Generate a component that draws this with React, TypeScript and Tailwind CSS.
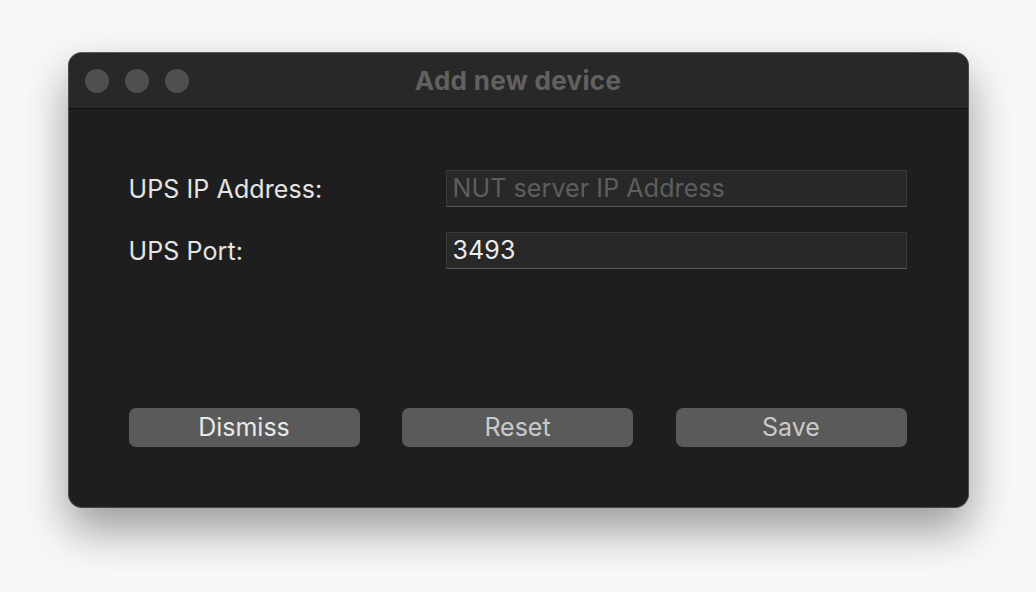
import React from "react";

const font = { fontFamily: 'Inter, "Liberation Sans", sans-serif' };

function Field({ label, value, placeholder }: { label: string; value?: string; placeholder?: string }) {
  return (
    <div className="flex items-center h-[37px]">
      <div className="w-[317px] text-[25px] tracking-[0.1px] text-[#e4e4e4] pt-[2px]">{label}</div>
      <div className="flex-1 h-[37px] flex items-center bg-[#282828] border border-[#3a3a3a] border-b-[#575757] px-[6px] text-[25px] tracking-[0.1px]">
        {value ? (
          <span className="text-[#ececec]">{value}</span>
        ) : (
          <span className="text-[#5e5e5e]">{placeholder}</span>
        )}
      </div>
    </div>
  );
}

function Btn({ children, dim }: { children: React.ReactNode; dim?: boolean }) {
  return (
    <button
      className={
        "w-[231px] h-[39px] rounded-[7px] bg-[#5a5a5a] text-[25px] flex items-center justify-center " +
        (dim ? "text-[#c9c9c9]" : "text-[#e8e8e8]")
      }
    >
      {children}
    </button>
  );
}

export default function App() {
  return (
    <div className="w-[1036px] h-[592px] bg-[#f8f8f8] flex justify-center pt-[52px]" style={font}>
      <div className="w-[901px] h-[456px] rounded-[14px] bg-[#1e1e1e] border border-[#4a4a4a] border-t-[#5a5a5a] shadow-[0_22px_45px_rgba(0,0,0,0.38)] flex flex-col overflow-hidden">
        {/* Title bar */}
        <div className="relative h-[56px] bg-[#282828] border-b border-[#0c0c0c] flex items-center pl-[16px]">
          <div className="flex gap-[16px]">
            <span className="w-[24px] h-[24px] rounded-full bg-[#4f4f4f]" />
            <span className="w-[24px] h-[24px] rounded-full bg-[#4f4f4f]" />
            <span className="w-[24px] h-[24px] rounded-full bg-[#4f4f4f]" />
          </div>
          <div className="absolute inset-0 flex items-center justify-center text-[26px] font-bold tracking-[0.3px] text-[#616161]">
            Add new device
          </div>
        </div>

        {/* Body */}
        <div className="flex-1 flex flex-col pt-[61px] pb-[60px] pl-[60px] pr-[61px]">
          <div className="flex flex-col gap-[25px]">
            <Field label="UPS IP Address:" placeholder="NUT server IP Address" />
            <Field label="UPS Port:" value="3493" />
          </div>
          <div className="flex-1" />
          <div className="flex justify-between">
            <Btn>Dismiss</Btn>
            <Btn dim>Reset</Btn>
            <Btn dim>Save</Btn>
          </div>
        </div>
      </div>
    </div>
  );
}
